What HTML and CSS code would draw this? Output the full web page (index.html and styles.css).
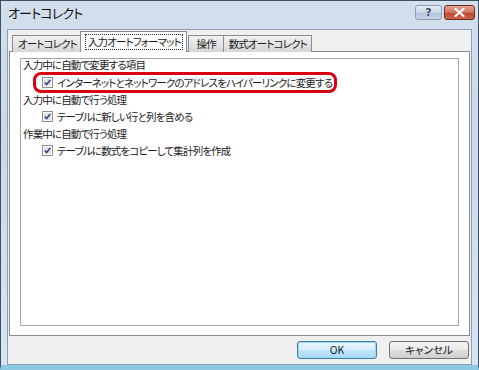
FILE: index.html
```html
<!DOCTYPE html>
<html lang="ja">
  <head>
    <meta charset="utf-8">
    <title>オートコレクト</title>
    <link rel="stylesheet" href="styles.css">
  </head>
  <body>
    <div class="window">
      <div class="titlebar">
        <span class="title">オートコレクト</span>
        <div class="caption-btns">
          <span class="cap-btn help">?</span>
          <span class="cap-btn close">
            <svg width="11" height="9" viewBox="0 0 11 9"><path d="M1.5 1 L9.5 8 M9.5 1 L1.5 8" stroke="#fff" stroke-width="2.2" stroke-linecap="round"/></svg>
          </span>
        </div>
      </div>
      <div class="client">
        <div class="tabs">
          <span class="tab">オートコレクト</span>
          <span class="tab active"><span class="focus">入力オートフォーマット</span></span>
          <span class="tab">操作</span>
          <span class="tab">数式オートコレクト</span>
        </div>
        <div class="panel">
          <div class="box">
            <div class="heading">入力中に自動で変更する項目</div>
            <div class="item marked">
              <span class="check"><svg width="11" height="11" viewBox="0 0 11 11"><rect x="0.5" y="0.5" width="10" height="10" fill="#fff" stroke="#8e8f8f"/><rect x="2" y="2" width="7" height="7" fill="#dfe3ea"/><path d="M2.8 5.6 L4.6 7.6 L8.3 2.9" fill="none" stroke="#35487f" stroke-width="1.6"/></svg></span>
              <span>インターネットとネットワークのアドレスをハイパーリンクに変更する</span>
            </div>
            <div class="heading">入力中に自動で行う処理</div>
            <div class="item">
              <span class="check"><svg width="11" height="11" viewBox="0 0 11 11"><rect x="0.5" y="0.5" width="10" height="10" fill="#fff" stroke="#8e8f8f"/><rect x="2" y="2" width="7" height="7" fill="#dfe3ea"/><path d="M2.8 5.6 L4.6 7.6 L8.3 2.9" fill="none" stroke="#35487f" stroke-width="1.6"/></svg></span>
              <span>テーブルに新しい行と列を含める</span>
            </div>
            <div class="heading">作業中に自動で行う処理</div>
            <div class="item">
              <span class="check"><svg width="11" height="11" viewBox="0 0 11 11"><rect x="0.5" y="0.5" width="10" height="10" fill="#fff" stroke="#8e8f8f"/><rect x="2" y="2" width="7" height="7" fill="#dfe3ea"/><path d="M2.8 5.6 L4.6 7.6 L8.3 2.9" fill="none" stroke="#35487f" stroke-width="1.6"/></svg></span>
              <span>テーブルに数式をコピーして集計列を作成</span>
            </div>
          </div>
        </div>
        <div class="buttons">
          <button class="btn default">OK</button>
          <button class="btn">キャンセル</button>
        </div>
      </div>
    </div>
  </body>
</html>
```

FILE: styles.css
```css
* {
    box-sizing: border-box;
}
body, html {
    height: 100%;
    overflow: hidden;
}
body {
    margin: 0;
    color: #1a1a1a;
    font: 10.5px/17px "Noto Sans CJK JP", sans-serif;
    font-feature-settings: "palt" 1;
    letter-spacing: -0.85px;
}
.window {
    width: 479px;
    height: 370px;
    border: 1px solid #3d4f63;
    border-bottom: 5px solid #8cc9e3;
    background: linear-gradient(to bottom, #d3dfec, #c9d9ea 40%, #d9e5f1);
    padding: 0 6px 0 6px;
    display: flex;
    flex-direction: column;
}
.titlebar {
    height: 28px;
    display: flex;
    align-items: flex-start;
    justify-content: space-between;
}
.title {
    padding: 2px 0 0 1px;
    font-size: 13px;
    line-height: 20px;
    color: #111;
}
.caption-btns {
    display: flex;
    gap: 2px;
    padding-top: 4px;
    margin-right: -3px;
}
.cap-btn {
    height: 15px;
    border-radius: 3px;
    display: flex;
    align-items: center;
    justify-content: center;
}
.help {
    width: 27px;
    border: 1px solid #8c9eb3;
    background: linear-gradient(to bottom, #e6eef7, #c9d7e7 50%, #b3c6dc 51%, #c6d6e8);
    color: #3e5066;
    font: bold 11px/13px "DejaVu Sans", sans-serif;
    letter-spacing: 0;
}
.close {
    width: 31px;
    border: 1px solid #6b2c22;
    background: linear-gradient(to bottom, #e7a694, #d2705c 50%, #c0412a 51%, #d0654d);
}
.client {
    flex: 1;
    background: #f0f0f0;
    border: 1px solid #8d9fb3;
    padding: 1px 1px 0 1px;
    display: flex;
    flex-direction: column;
}
.tabs {
    display: flex;
    align-items: flex-end;
    padding-left: 3px;
    height: 21px;
    position: relative;
    z-index: 1;
    margin-bottom: -1px;
}
.tab {
    min-width: 36px;
    height: 17px;
    padding: 0 4px 0 5px;
    border: 1px solid #898c95;
    border-bottom: none;
    background: linear-gradient(to bottom, #f2f2f2, #e4e4e4 50%, #d6d6d6);
    line-height: 16px;
    text-align: center;
    margin-right: -1px;
}
.tab.active {
    height: 21px;
    background: #fff;
    margin: 0 1px 0 -1px;
    padding: 2px 3px 0 4px;
}
.focus {
    display: block;
    border: 1px dotted #333;
    line-height: 14px;
    padding: 0 1px 0 2px;
}
.panel {
    height: 285px;
    background: #fff;
    border: 1px solid #898c95;
    padding: 6px 10px 9px 10px;
}
.box {
    height: 100%;
    border: 1px solid #a5a5a5;
    padding: 0 2px;
}
.heading {
    height: 17px;
}
.heading:first-child {
    margin-top: -3px;
}
.item {
    height: 17px;
    display: flex;
    align-items: center;
    padding-left: 19px;
}
.item.marked {
    width: fit-content;
    height: 15px;
    margin: 2px 0 1px 13px;
    padding: 0 2px 0 6px;
    outline: 3px solid #d80010;
    border-radius: 5px;
}
.check {
    display: flex;
    margin-right: 4px;
}
.buttons {
    flex: 1;
    display: flex;
    justify-content: flex-end;
    align-items: center;
    gap: 12px;
    padding: 0 1px 0 0;
}
.btn {
    width: 80px;
    height: 18px;
    border: 1px solid #707070;
    border-radius: 3px;
    background: linear-gradient(to bottom, #f3f3f3, #ebebeb 48%, #dddddd 52%, #cfcfcf);
    font: 10.5px/14px "Noto Sans CJK JP", sans-serif;
    font-feature-settings: "palt" 1;
    color: #1a1a1a;
    padding: 0;
}
.btn.default {
    border-color: #3c7fb1;
    box-shadow: inset 0 0 0 1px #9ed5f0;
    background: linear-gradient(to bottom, #eaf6fd, #d9f0fc 48%, #bee6fd 52%, #a7d9f5);
}
```
